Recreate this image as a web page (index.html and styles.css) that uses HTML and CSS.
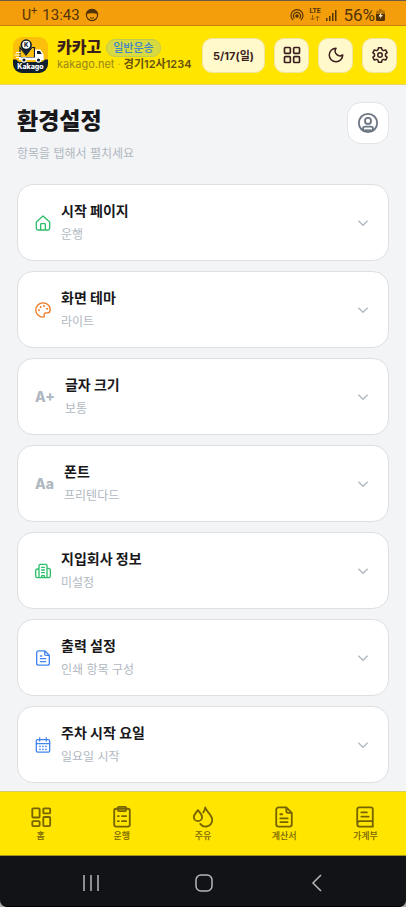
FILE: index.html
```html
<!DOCTYPE html>
<html lang="ko">
<head>
<meta charset="utf-8">
<meta name="viewport" content="width=device-width, initial-scale=1">
<title>카카고 환경설정</title>
<link rel="stylesheet" href="styles.css">
</head>
<body>
<div class="status">
  <div class="status-group">
    <span class="carrier">U<sup>+</sup></span>
    <span class="clock">13:43</span>
    <svg class="face" viewBox="0 0 14 14"><circle cx="7" cy="7" r="5.6" fill="none" stroke="currentColor" stroke-width="1.2"/><path d="M1.500 6C1.500 2.500 4 1 7 1s5.500 1.500 5.500 5C10 5 4 5 1.500 6z" fill="currentColor"/><path d="M5 9.500q2 1.600 4 0" fill="none" stroke="currentColor"/></svg>
  </div>
  <div class="status-group">
    <svg class="hotspot" viewBox="0 0 14 14" fill="none" stroke="currentColor" stroke-width="1.200"><path d="M3 12a6 6 0 1 1 8 0M4.500 10.500a3.600 3.600 0 1 1 5 0"/><circle cx="7" cy="8" r="1.200" fill="currentColor"/></svg>
    <span class="lte">LTE<svg viewBox="0 0 12 6" fill="none" stroke="currentColor"><path d="M3.500 0v5M1.500 3l2 2 2-2M8.500 6V1M6.500 3l2-2 2 2"/></svg></span>
    <svg class="signal" viewBox="0 0 12 12" fill="currentColor"><path d="M0 9h1.500v3H0zM3 7h1.500v5H3zM6 4h1.500v8H6zM9 1h1.500v11H9z"/></svg>
    <span class="percent">56%</span>
    <svg class="battery" viewBox="0 0 9 12"><path d="M3 0h3v1.500h1.500A1.500 1.500 0 0 1 9 3v3H0V3a1.500 1.500 0 0 1 1.500-1.500H3z" fill="currentColor" opacity=".4"/><path d="M0 5h9v5.500A1.500 1.500 0 0 1 7.500 12h-6A1.500 1.500 0 0 1 0 10.500z" fill="currentColor"/><path d="M5.500 3L2.500 7.500h2L3.800 10l3-4H5z" fill="#fff3cf"/></svg>
  </div>
</div>

<header class="header">
  <svg class="logo" viewBox="0 0 35 36" role="img" aria-label="Kakago">
    <defs><clipPath id="logo-shape"><rect width="35" height="36" rx="9"/></clipPath></defs>
    <g clip-path="url(#logo-shape)">
      <rect width="35" height="36" fill="#fbbf0c"/>
      <path d="M0 22.500h3l3 2.500h23l3-2.500h3V36H0z" fill="#10202f"/>
      <path d="M7 10.500l6 7.500 6-7.500h2.500v10H7z" fill="#fbbf0c" stroke="#10202f" stroke-width="1.200"/>
      <path d="M22 12.500h5.500l3 4.500v6H22z" fill="#fff"/>
      <path d="M24 14h3l1.800 3H24z" fill="#10202f"/>
      <path d="M6 20.500h24.500V23H6z" fill="#fff"/>
      <path d="M3 15.500h4.500M1.500 18h6M3 20.500h5" stroke="#fff" stroke-width="1.200"/>
      <path d="M13.200 2.300a5.700 5.700 0 0 1 5.700 5.700c0 3.800-5.700 9.500-5.700 9.500S7.500 11.800 7.500 8a5.700 5.700 0 0 1 5.700-5.700z" fill="#10202f"/>
      <circle cx="13.200" cy="7.800" r="4" fill="#fff"/>
      <g fill="#10202f" stroke="#fff" stroke-width="1.200"><circle cx="11" cy="23" r="2.200"/><circle cx="25.500" cy="23" r="2.200"/></g>
      <text class="logo-pin" x="13.200" y="10" text-anchor="middle">K</text>
      <text class="logo-word" x="17.500" y="31.500" text-anchor="middle">Kakago</text>
    </g>
  </svg>
  <div class="brand">
    <div class="brand-top"><strong class="brand-name">카카고</strong><span class="pill">일반운송</span></div>
    <div class="brand-sub">kakago.net <span class="dot">·</span> <b>경기12사1234</b></div>
  </div>
  <div class="actions">
    <button class="action date" type="button">5/17(일)</button>
    <button class="action" type="button" aria-label="메뉴"><svg viewBox="0 0 24 24"><rect x="3" y="3" width="7" height="7" rx="1"/><rect x="14" y="3" width="7" height="7" rx="1"/><rect x="3" y="14" width="7" height="7" rx="1"/><rect x="14" y="14" width="7" height="7" rx="1"/></svg></button>
    <button class="action" type="button" aria-label="다크 모드"><svg viewBox="0 0 24 24"><path d="M12 3a6.500 6.500 0 0 0 9 9 9 9 0 1 1-9-9z"/></svg></button>
    <button class="action" type="button" aria-label="설정"><svg viewBox="0 0 24 24"><path d="M10 3.200h4l.7 2.900 1.900 1.100 2.900-.9 2 3.500-2.200 2v2.400l2.200 2-2 3.500-2.900-.9-1.900 1.100-.7 2.900h-4l-.7-2.900-1.900-1.100-2.900.9-2-3.500 2.200-2v-2.400l-2.200-2 2-3.500 2.900.9 1.900-1.100z" transform="translate(0 -1)"/><circle cx="12" cy="12" r="3"/></svg></button>
  </div>
</header>

<main class="main">
  <div class="page-head">
    <div>
      <h1>환경설정</h1>
      <p>항목을 탭해서 펼치세요</p>
    </div>
    <button class="profile" type="button" aria-label="프로필"><svg viewBox="0 0 24 24"><circle cx="12" cy="12" r="10"/><circle cx="12" cy="9.700" r="3.300"/><path d="M6.500 19.500v-1a2.500 2.500 0 0 1 2.500-2.500h6a2.500 2.500 0 0 1 2.500 2.500v1"/><path d="M7 20h10"/></svg></button>
  </div>

  <div class="cards">
    <button class="card" type="button" aria-expanded="false">
      <svg class="icon green" viewBox="0 0 24 24"><path d="M2 10.500L12 1.500l10 9V20a2.500 2.500 0 0 1-2.500 2.500h-15A2.500 2.500 0 0 1 2 20z"/><path d="M8.500 22v-8a1 1 0 0 1 1-1h5a1 1 0 0 1 1 1v8"/></svg>
      <span class="card-text"><span class="card-title">시작 페이지</span><span class="card-value">운행</span></span>
      <svg class="chevron" viewBox="0 0 24 24"><path d="M5 8.500l7 7 7-7"/></svg>
    </button>
    <button class="card" type="button" aria-expanded="false">
      <svg class="icon orange" viewBox="0 0 24 24"><path d="M12 1.200a10.800 10.800 0 0 0 0 21.600c1.800 0 2.400-1.200 1.900-2.600-.8-2 .3-3.900 2.400-3.900H19c2.200 0 3.800-1.800 3.800-4.500C22.800 5.700 17.900 1.200 12 1.200z"/><g class="dots"><circle cx="6" cy="12.500" r="1.500"/><circle cx="8.500" cy="7.500" r="1.500"/><circle cx="13.500" cy="6" r="1.500"/><circle cx="18" cy="10" r="1.500"/></g></svg>
      <span class="card-text"><span class="card-title">화면 테마</span><span class="card-value">라이트</span></span>
      <svg class="chevron" viewBox="0 0 24 24"><path d="M5 8.500l7 7 7-7"/></svg>
    </button>
    <button class="card" type="button" aria-expanded="false">
      <span class="letters">A+</span>
      <span class="card-text"><span class="card-title">글자 크기</span><span class="card-value">보통</span></span>
      <svg class="chevron" viewBox="0 0 24 24"><path d="M5 8.500l7 7 7-7"/></svg>
    </button>
    <button class="card" type="button" aria-expanded="false">
      <span class="letters">Aa</span>
      <span class="card-text"><span class="card-title">폰트</span><span class="card-value">프리텐다드</span></span>
      <svg class="chevron" viewBox="0 0 24 24"><path d="M5 8.500l7 7 7-7"/></svg>
    </button>
    <button class="card" type="button" aria-expanded="false">
      <svg class="icon green" viewBox="0 0 24 24"><path d="M6 22V4a2 2 0 0 1 2-2h8a2 2 0 0 1 2 2v18M6 9H4a3 3 0 0 0-3 3v8a2 2 0 0 0 2 2h18a2 2 0 0 0 2-2v-9a3 3 0 0 0-3-3h-2M10 6.500h4M10 10.500h4M10 14.500h4M10 22v-3h4v3"/></svg>
      <span class="card-text"><span class="card-title">지입회사 정보</span><span class="card-value">미설정</span></span>
      <svg class="chevron" viewBox="0 0 24 24"><path d="M5 8.500l7 7 7-7"/></svg>
    </button>
    <button class="card" type="button" aria-expanded="false">
      <svg class="icon blue" viewBox="0 0 24 24"><path d="M14.500 1.200H5.500a3 3 0 0 0-3 3v15.600a3 3 0 0 0 3 3h13a3 3 0 0 0 3-3V8zM14.500 1.200V6a2 2 0 0 0 2 2H21M8 9h2M8 13h8M8 17.500h8"/></svg>
      <span class="card-text"><span class="card-title">출력 설정</span><span class="card-value">인쇄 항목 구성</span></span>
      <svg class="chevron" viewBox="0 0 24 24"><path d="M5 8.500l7 7 7-7"/></svg>
    </button>
    <button class="card" type="button" aria-expanded="false">
      <svg class="icon blue" viewBox="0 0 24 24"><rect x="2" y="4" width="20" height="18.800" rx="2"/><path d="M7 1.200V6M17 1.200V6M2 10h20"/><g class="dots"><circle cx="7.500" cy="14" r="1.300"/><circle cx="12" cy="14" r="1.300"/><circle cx="16.500" cy="14" r="1.300"/><circle cx="7.500" cy="18.500" r="1.300"/><circle cx="12" cy="18.500" r="1.300"/><circle cx="16.500" cy="18.500" r="1.300"/></g></svg>
      <span class="card-text"><span class="card-title">주차 시작 요일</span><span class="card-value">일요일 시작</span></span>
      <svg class="chevron" viewBox="0 0 24 24"><path d="M5 8.500l7 7 7-7"/></svg>
    </button>
  </div>
</main>

<nav class="tabs">
  <a href="#home"><svg viewBox="0 0 24 24"><rect x="2.500" y="2.500" width="8" height="10" rx="1"/><rect x="14.500" y="2.500" width="7.500" height="5.500" rx="1"/><rect x="2.500" y="16.500" width="8" height="5.500" rx="1"/><rect x="14.500" y="12" width="7.500" height="10" rx="1"/></svg>홈</a>
  <a href="#trips"><svg viewBox="0 0 24 24"><rect x="3.500" y="3" width="17" height="19.500" rx="2"/><rect x="7.500" y="1" width="9" height="4.500" rx="1.200"/><path d="M7.500 11h1M12 11h4.500M7.500 16.500h1M12 16.500h4.500"/></svg>운행</a>
  <a href="#fuel"><svg viewBox="0 0 24 24"><path d="M6.500 4.500c2 3 4.500 4.800 4.500 7.500a4.500 4.500 0 0 1-9 0C2 9.300 4.500 7.500 6.500 4.500z"/><path d="M12.300 7c1.200-1.600 1.900-3.300 2.200-5.500C15.500 6.500 22 9.500 22 15a7.200 7.200 0 0 1-13 4.500"/></svg>주유</a>
  <a href="#invoices"><svg viewBox="0 0 24 24"><path d="M14.500 1.500H6A2.500 2.500 0 0 0 3.500 4v16A2.500 2.500 0 0 0 6 22.500h12a2.500 2.500 0 0 0 2.500-2.500V7.500zM14.500 1.500v4a2 2 0 0 0 2 2h4M8 9h2M8 13.500h8M8 17.500h8"/></svg>계산서</a>
  <a href="#ledger"><svg viewBox="0 0 24 24"><path d="M3.500 19.500V4A2.500 2.500 0 0 1 6 1.500h12.500a2 2 0 0 1 2 2v19h-14a3 3 0 0 1 0-6h14M8 7h6M8 11.500h8"/></svg>가계부</a>
</nav>

<div class="system-wrap">
  <div class="system">
    <button type="button" aria-label="최근 앱"><svg viewBox="0 0 20 20"><path d="M3 2v16M10 2v16M17 2v16"/></svg></button>
    <button type="button" aria-label="홈 화면"><svg viewBox="0 0 20 20"><rect x="2" y="2" width="16" height="16" rx="5"/></svg></button>
    <button type="button" aria-label="뒤로"><svg viewBox="0 0 20 20"><path d="M14 2l-8 8 8 8"/></svg></button>
  </div>
</div>
</body>
</html>
```
FILE: styles.css
```css
* { box-sizing: border-box; }

body {
  margin: 0;
  min-height: 100vh;
  display: flex;
  flex-direction: column;
  background: #f3f4f6;
  color: #18181b;
  font-family: Inter, "Noto Sans CJK KR", sans-serif;
}

button { font: inherit; color: inherit; margin: 0; cursor: pointer; }
svg { display: block; flex: none; }

.status {
  display: flex;
  justify-content: space-between;
  align-items: center;
  height: 26px;
  padding: 3px 21px 0 22px;
  border-top: 1px solid #6b5a45;
  border-bottom: 1px solid #c97d10;
  background: #f59e0b;
  color: #53330a;
  font-family: Roboto, sans-serif;
}
.status-group { display: flex; align-items: center; gap: 5px; }
.carrier { font-size: 14px; line-height: 20px; }
.carrier sup { font-size: 11px; line-height: 0; }
.clock { font-size: 15px; line-height: 20px; }
.percent { font-size: 17px; line-height: 20px; }
.face, .hotspot { width: 14px; height: 14px; }
.lte { font-size: 7px; line-height: 7px; font-weight: 700; }
.lte svg { width: 12px; height: 6px; opacity: 0.6; }
.signal { width: 12px; height: 12px; }
.battery { width: 9px; height: 12px; margin-left: -4px; }

.header {
  display: flex;
  align-items: center;
  gap: 9px;
  height: 59px;
  padding: 0 9px 0 13px;
  border-bottom: 1px solid #e6d670;
  background: #ffe500;
  color: #3c1e1e;
}
.logo { width: 35px; height: 36px; }
.logo-pin { font-size: 6px; font-weight: 800; fill: #10202f; }
.logo-word { font-size: 7px; font-weight: 800; fill: #fff; }
.brand { flex: 1; min-width: 0; white-space: nowrap; }
.brand-top { display: flex; align-items: center; gap: 5px; height: 19px; }
.brand-name { font-size: 16px; line-height: 19px; font-weight: 800; }
.pill {
  height: 18px;
  padding: 0 6px;
  border: 1px solid #bdca55;
  border-radius: 9px;
  background: #d9d940;
  color: #4186c8;
  font-size: 11px;
  line-height: 16px;
  font-weight: 500;
}
.brand-sub { font-size: 11px; line-height: 15px; color: #97851a; }
.brand-sub .dot { color: #c9b520; }
.brand-sub b { color: #66500f; font-weight: 600; }
.actions { display: flex; gap: 9px; }
.action {
  display: grid;
  place-items: center;
  width: 35px;
  height: 35px;
  padding: 0;
  border: 1px solid #f1e6a0;
  border-radius: 10px;
  background: #fff9cc;
}
.action.date { width: 63px; font-size: 11px; font-weight: 700; }
.action svg {
  width: 20px;
  height: 20px;
  fill: none;
  stroke: currentColor;
  stroke-width: 2;
  stroke-linejoin: round;
}
.action:nth-child(n+3) svg { width: 18px; height: 18px; }

.main { flex: 1; padding: 17px 17px 8px; }
.page-head { display: flex; justify-content: space-between; align-items: flex-start; height: 82px; }
h1 { margin: 0; font-size: 23px; line-height: 38px; font-weight: 800; }
.page-head p { margin: 3px 0 0; font-size: 12px; line-height: 22px; color: #b0b8c1; }
.profile {
  display: grid;
  place-items: center;
  width: 42px;
  height: 42px;
  padding: 0;
  border: 1px solid #e2e4e7;
  border-radius: 14px;
  background: #fff;
  color: #6b7684;
}
.profile svg { width: 22px; height: 22px; fill: none; stroke: currentColor; stroke-width: 2; }

.cards { display: flex; flex-direction: column; gap: 10px; }
.card {
  display: flex;
  align-items: center;
  gap: 10px;
  width: 100%;
  padding: 14px 17px;
  border: 1px solid #dddfe2;
  border-radius: 16px;
  background: #fff;
  text-align: left;
}
.icon {
  width: 16px;
  height: 16px;
  fill: none;
  stroke: currentColor;
  stroke-width: 2;
  stroke-linecap: round;
  stroke-linejoin: round;
}
.dots { fill: currentColor; stroke: none; }
.green { color: #2fbf6b; }
.orange { color: #f07a26; }
.blue { color: #4285ee; }
.letters { font-size: 14px; line-height: 20px; font-weight: 800; color: #b0b8c1; }
.card-text { flex: 1; display: flex; flex-direction: column; }
.card-title { font-size: 14px; line-height: 24px; font-weight: 700; }
.card-value { font-size: 12px; line-height: 23px; color: #b0b8c1; }
.chevron { width: 16px; height: 16px; fill: none; stroke: #b0b8c1; stroke-width: 2; }

.tabs {
  display: grid;
  grid-template-columns: repeat(5, 1fr);
  height: 65px;
  padding-top: 14px;
  border-top: 1px solid #d5cc6b;
  border-bottom: 1px solid #a0921a;
  background: #ffe500;
}
.tabs a {
  display: flex;
  flex-direction: column;
  align-items: center;
  gap: 1px;
  color: #776400;
  font-size: 9px;
  line-height: 14px;
  font-weight: 500;
  text-decoration: none;
}
.tabs svg {
  width: 22px;
  height: 22px;
  fill: none;
  stroke: currentColor;
  stroke-width: 2;
  stroke-linecap: round;
  stroke-linejoin: round;
}

.system-wrap { background: #a9a9ab; }
.system {
  display: flex;
  justify-content: space-around;
  align-items: center;
  height: 51px;
  padding: 3px 32px 0 34px;
  border-bottom: 1px solid #000;
  border-radius: 0 0 7px 7px;
  background: #121317;
  color: #b8b8ba;
}
.system button { padding: 0; border: 0; background: none; }
.system svg { width: 20px; height: 20px; fill: none; stroke: currentColor; stroke-width: 1.5; }
```
